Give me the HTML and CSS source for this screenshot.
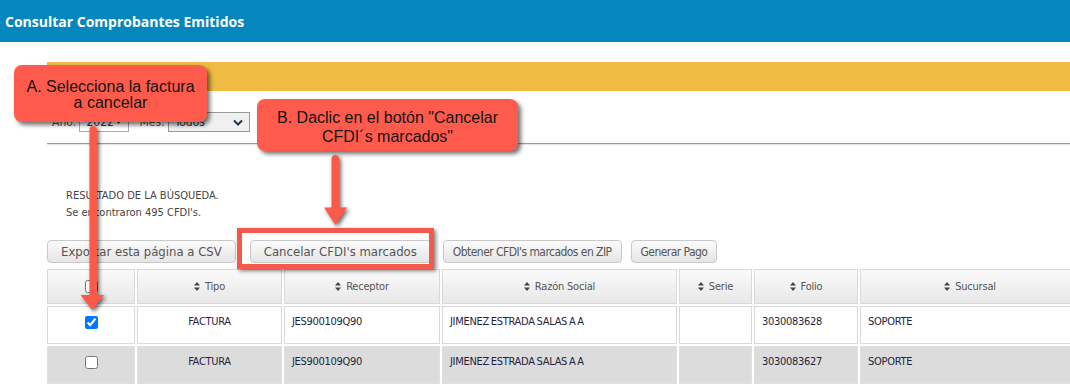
FILE: index.html
```html
<!DOCTYPE html>
<html lang="es">
<head>
<meta charset="utf-8">
<title>Consultar Comprobantes Emitidos</title>
<link rel="stylesheet" href="styles.css">
</head>
<body>
<header class="topbar"><h1 class="title">Consultar Comprobantes Emitidos</h1></header>
<main class="page">
  <div class="notice"></div>
  <div class="filters">
    <span class="flabel">Año:</span>
    <div class="fselect fselect-year"><span>2022</span><svg class="caret" width="7" height="4" viewBox="0 0 7 4"><path d="M0 0H7L3.5 4Z" fill="#333"/></svg></div>
    <span class="flabel">Mes:</span>
    <div class="fselect fselect-month"><span>Todos</span><svg class="chev" width="10" height="7" viewBox="0 0 10 7"><path d="M1 1.5L5 5.5L9 1.5" fill="none" stroke="#1f3550" stroke-width="2"/></svg></div>
  </div>
  <hr class="divider">
  <div class="results">
    <p>RESULTADO DE LA BÚSQUEDA.</p>
    <p>Se encontraron 495 CFDI's.</p>
  </div>
  <div class="actions">
    <button class="btn">Exportar esta página a CSV</button>
    <button class="btn">Cancelar CFDI's marcados</button>
    <button class="btn btn-compact">Obtener CFDI's marcados en ZIP</button>
    <button class="btn btn-compact btn-last">Generar Pago</button>
  </div>
  <table class="grid">
    <thead>
      <tr>
        <th class="c-chk"><input type="checkbox"></th>
        <th class="c-tipo"><span class="sort"><svg width="6" height="9" viewBox="0 0 6 9"><path d="M3 0L6 3.6H0ZM0 5.4H6L3 9Z" fill="#444"/></svg>Tipo</span></th>
        <th class="c-rec"><span class="sort"><svg width="6" height="9" viewBox="0 0 6 9"><path d="M3 0L6 3.6H0ZM0 5.4H6L3 9Z" fill="#444"/></svg>Receptor</span></th>
        <th class="c-raz"><span class="sort"><svg width="6" height="9" viewBox="0 0 6 9"><path d="M3 0L6 3.6H0ZM0 5.4H6L3 9Z" fill="#444"/></svg>Razón Social</span></th>
        <th class="c-ser"><span class="sort"><svg width="6" height="9" viewBox="0 0 6 9"><path d="M3 0L6 3.6H0ZM0 5.4H6L3 9Z" fill="#444"/></svg>Serie</span></th>
        <th class="c-fol"><span class="sort"><svg width="6" height="9" viewBox="0 0 6 9"><path d="M3 0L6 3.6H0ZM0 5.4H6L3 9Z" fill="#444"/></svg>Folio</span></th>
        <th class="c-suc"><span class="sort"><svg width="6" height="9" viewBox="0 0 6 9"><path d="M3 0L6 3.6H0ZM0 5.4H6L3 9Z" fill="#444"/></svg>Sucursal</span></th>
      </tr>
    </thead>
    <tbody>
      <tr>
        <td class="center"><input type="checkbox" checked></td>
        <td class="center">FACTURA</td>
        <td>JES900109Q90</td>
        <td>JIMENEZ ESTRADA SALAS A A</td>
        <td></td>
        <td>3030083628</td>
        <td>SOPORTE</td>
      </tr>
      <tr class="alt">
        <td class="center"><input type="checkbox"></td>
        <td class="center">FACTURA</td>
        <td>JES900109Q90</td>
        <td>JIMENEZ ESTRADA SALAS A A</td>
        <td></td>
        <td>3030083627</td>
        <td>SOPORTE</td>
      </tr>
    </tbody>
  </table>
</main>

<div class="callout callout-a">A. Selecciona la factura<br>a cancelar</div>
<div class="callout callout-b">B. Daclic en el botón "Cancelar<br>CFDI´s marcados"</div>
<div class="frame"></div>
<svg class="arrows" width="1070" height="385" viewBox="0 0 1070 385">
  <g class="arrow">
    <rect x="89.5" y="126" width="7.5" height="172" rx="3.7" fill="#fb5a4a"/>
    <path d="M80.5 295H104L92.3 310Z" fill="#fb5a4a"/>
  </g>
  <g class="arrow">
    <rect x="331.5" y="155" width="7.5" height="56" rx="3.7" fill="#fb5a4a"/>
    <path d="M324 207.5H347L335.5 225Z" fill="#fb5a4a"/>
  </g>
</svg>
</body>
</html>
```

FILE: styles.css
```css
html, body {
  margin: 0;
  padding: 0;
  overflow: hidden;
  background: #fff;
}

body {
  width: 1070px;
  height: 385px;
  position: relative;
  font-family: "Liberation Sans", Arial, sans-serif;
}

.topbar {
  height: 42px;
  background: #0587bd;
  display: flex;
  align-items: center;
  padding-left: 5px;
}

.title {
  margin: 0;
  font: 700 14px "Open Sans", sans-serif;
  color: #fff;
}

.page {
  padding-left: 47px;
}

.notice {
  margin-top: 20px;
  height: 29px;
  background: #efbb42;
}

.filters {
  margin-top: 21px;
  height: 20px;
  display: flex;
  align-items: center;
  padding-left: 5px;
  font: 12px "DejaVu Sans Condensed", "DejaVu Sans", sans-serif;
  color: #555;
}

.flabel {
  margin-right: 3px;
}

.fselect {
  height: 20px;
  box-sizing: border-box;
  border: 1px solid #a9a9a9;
  display: flex;
  align-items: center;
  justify-content: space-between;
  padding: 0 6px;
  color: #333;
}

.fselect-year {
  width: 50px;
  margin-right: 10px;
}

.fselect-month {
  width: 82px;
  background: #f0f0f0;
  border-color: #999;
}

.divider {
  margin: 11px 0 0;
  border: 0;
  border-top: 1px solid #9c9c9c;
  border-bottom: 1px solid #e4e4e4;
  height: 0;
}

.results {
  margin-top: 42px;
  padding-left: 19px;
  font: 11px/17px "DejaVu Sans Condensed", "DejaVu Sans", sans-serif;
  color: #444;
}

.results p {
  margin: 0;
}

.actions {
  margin-top: 19px;
  display: flex;
  gap: 12px;
}

.btn {
  height: 23px;
  padding: 0 13px;
  border: 1px solid #c9c9c9;
  border-radius: 4px;
  background: linear-gradient(#fbfbfb, #e5e5e5);
  font: 13px "DejaVu Sans Condensed", "DejaVu Sans", sans-serif;
  color: #555;
}

.btn:first-child {
  margin-right: 2px;
}

.btn-compact {
  padding: 0 9px;
  font-size: 12px;
  letter-spacing: -0.55px;
}

.btn-last {
  margin-left: -3px;
}

.grid {
  margin: 4px 0 0 -2px;
  border-collapse: separate;
  border-spacing: 2px;
  table-layout: fixed;
  width: 1037px;
  font-family: "DejaVu Sans Condensed", "DejaVu Sans", sans-serif;
}

.grid th,
.grid td {
  box-sizing: border-box;
  border: 1px solid #d9d9d9;
}

.grid th {
  height: 35px;
  background: linear-gradient(#fafafa, #e8e8e8);
  font-weight: 400;
  font-size: 11px;
  letter-spacing: -0.2px;
  color: #555;
  text-align: center;
  padding: 0;
}

.c-chk { width: 88px; }
.c-tipo { width: 145px; }
.c-rec { width: 156px; }
.c-raz { width: 235px; }
.c-ser { width: 73px; }
.c-fol { width: 104px; }
.c-suc { width: 220px; }

.sort {
  display: inline-flex;
  align-items: center;
  gap: 5px;
}

.grid td {
  height: 38px;
  padding: 0 7px 6px;
  font-size: 11px;
  letter-spacing: -0.3px;
  word-spacing: -1px;
  line-height: 16px;
  color: #1f2540;
  background: #fff;
  vertical-align: middle;
}

.grid .alt td {
  background: #dcdcdc;
  border-color: #e0e0e0;
}

.grid td.center {
  text-align: center;
}

.grid input {
  margin: 0;
  vertical-align: middle;
}

.callout {
  position: absolute;
  background: #ff5b4c;
  border-radius: 8px;
  box-shadow: 3px 3px 4px rgba(0, 0, 0, 0.55);
  color: #141414;
  font: 16px "Liberation Sans", Arial, sans-serif;
  display: flex;
  align-items: center;
  justify-content: center;
  text-align: center;
}

.callout-a {
  left: 14px;
  top: 65px;
  width: 193px;
  height: 57px;
  line-height: 16px;
  padding-top: 3px;
  box-sizing: border-box;
}

.callout-b {
  left: 257px;
  top: 99px;
  width: 261px;
  height: 52px;
  line-height: 19px;
  padding-top: 3px;
  box-sizing: border-box;
}

.frame {
  position: absolute;
  left: 237px;
  top: 228px;
  width: 197px;
  height: 41px;
  box-sizing: border-box;
  border: 5px solid #f4594b;
  box-shadow: 2px 2px 4px rgba(0, 0, 0, 0.5);
}

.arrows {
  position: absolute;
  left: 0;
  top: 0;
  pointer-events: none;
}

.arrow {
  filter: drop-shadow(2px 2px 2px rgba(0, 0, 0, 0.6));
}
```
